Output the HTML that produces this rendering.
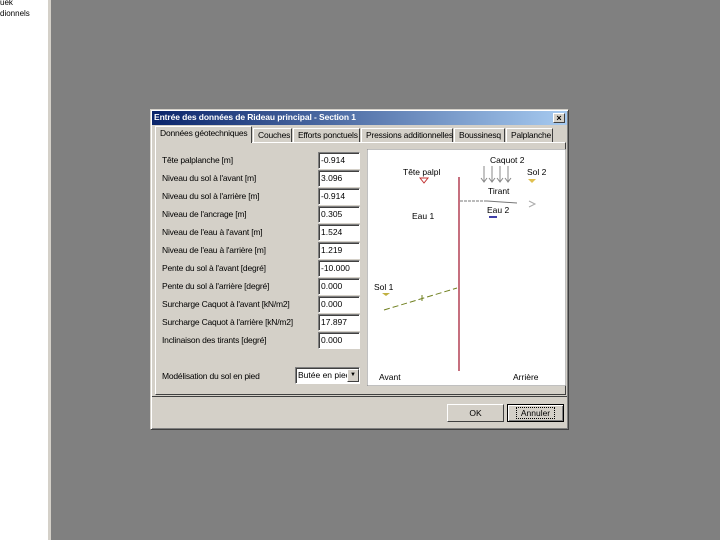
<!DOCTYPE html>
<html><head><meta charset="utf-8"><style>
*{margin:0;padding:0;box-sizing:border-box}
body{width:720px;height:540px;background:#808080;position:relative;overflow:hidden;font-family:"Liberation Sans",sans-serif;font-size:9px;color:#000}
.a{position:absolute}
.lbl{position:absolute;left:162px;font-size:8.5px;letter-spacing:-0.2px;white-space:nowrap}
.inp{position:absolute;left:318px;width:42px;height:17px;background:#fff;border-top:1px solid #808080;border-left:1px solid #808080;border-right:1px solid #fff;border-bottom:1px solid #fff;box-shadow:inset 1px 1px 0 #404040;font-size:8.5px;padding:2px 0 0 2px}
.tab{position:absolute;top:128px;height:14px;background:#d4d0c8;border-top:1px solid #fff;border-left:1px solid #fff;border-right:1px solid #404040;font-size:8.5px;padding:1px 0 0 4px;white-space:nowrap;letter-spacing:-0.2px}
.btn{position:absolute;top:404px;height:18px;background:#d4d0c8;border-top:1px solid #fff;border-left:1px solid #fff;border-right:1px solid #404040;border-bottom:1px solid #404040;text-align:center;font-size:8.5px;padding-top:3px}
svg text{font-family:"Liberation Sans",sans-serif;font-size:8.5px}
</style></head><body>
<div class="a" style="left:0;top:0;width:48px;height:540px;background:#fff"></div>
<div class="a" style="left:48px;top:0;width:3px;height:540px;background:#d4d0c8"></div>
<div class="a" style="left:0;top:-2px;font-size:8px">uek</div>
<div class="a" style="left:0;top:9px;font-size:8px">dionnels</div>

<div class="a" style="left:150px;top:109px;width:419px;height:321px;background:#d4d0c8;border-top:1px solid #d4d0c8;border-left:1px solid #d4d0c8;border-right:1px solid #404040;border-bottom:1px solid #404040;box-shadow:inset 1px 1px 0 #fff,inset -1px -1px 0 #808080"></div>
<div class="a" style="left:152px;top:111px;width:415px;height:14px;background:linear-gradient(90deg,#0a246a,#a6caf0);color:#fff;font-weight:bold;font-size:8.5px;padding:1px 0 0 2px;letter-spacing:-0.1px">Entrée des données de Rideau principal - Section 1</div>
<div class="a" style="left:553px;top:113px;width:12px;height:10px;background:#d4d0c8;border-top:1px solid #fff;border-left:1px solid #fff;border-right:1px solid #404040;border-bottom:1px solid #404040;font-size:9px;line-height:8px;text-align:center;font-weight:bold">×</div>

<div class="a" style="left:155px;top:142px;width:411px;height:253px;border-top:1px solid #fff;border-left:1px solid #fff;border-right:1px solid #404040;border-bottom:1px solid #404040"></div>
<div class="tab" style="left:155px;top:126px;height:17px;width:97px;background:#d4d0c8;z-index:2">Données géotechniques</div>
<div class="tab" style="left:253px;width:39px">Couches</div>
<div class="tab" style="left:293px;width:67px">Efforts ponctuels</div>
<div class="tab" style="left:361px;width:92px">Pressions additionnelles</div>
<div class="tab" style="left:454px;width:51px">Boussinesq</div>
<div class="tab" style="left:506px;width:47px">Palplanche</div>

<div class="lbl" style="top:155px">Tête palplanche [m]</div>
<div class="lbl" style="top:173px">Niveau du sol à l'avant [m]</div>
<div class="lbl" style="top:191px">Niveau du sol à l'arrière [m]</div>
<div class="lbl" style="top:209px">Niveau de l'ancrage [m]</div>
<div class="lbl" style="top:227px">Niveau de l'eau à l'avant [m]</div>
<div class="lbl" style="top:245px">Niveau de l'eau à l'arrière [m]</div>
<div class="lbl" style="top:263px">Pente du sol à l'avant [degré]</div>
<div class="lbl" style="top:281px">Pente du sol à l'arrière [degré]</div>
<div class="lbl" style="top:299px">Surcharge Caquot à l'avant [kN/m2]</div>
<div class="lbl" style="top:317px">Surcharge Caquot à l'arrière [kN/m2]</div>
<div class="lbl" style="top:335px">Inclinaison des tirants [degré]</div>
<div class="lbl" style="top:371px">Modélisation du sol en pied</div>

<div class="inp" style="top:152px">-0.914</div>
<div class="inp" style="top:170px">3.096</div>
<div class="inp" style="top:188px">-0.914</div>
<div class="inp" style="top:206px">0.305</div>
<div class="inp" style="top:224px">1.524</div>
<div class="inp" style="top:242px">1.219</div>
<div class="inp" style="top:260px">-10.000</div>
<div class="inp" style="top:278px">0.000</div>
<div class="inp" style="top:296px">0.000</div>
<div class="inp" style="top:314px">17.897</div>
<div class="inp" style="top:332px">0.000</div>
<div class="inp" style="top:367px;left:295px;width:65px;height:17px">Butée en pied</div>
<div class="a" style="left:347px;top:369px;width:12px;height:13px;background:#d4d0c8;border-top:1px solid #fff;border-left:1px solid #fff;border-right:1px solid #404040;border-bottom:1px solid #404040;font-size:6px;text-align:center;line-height:11px">▼</div>

<svg class="a" style="left:367px;top:149px" width="199" height="237">
<rect x="0" y="0" width="199" height="237" fill="#fff" stroke="#808080"/>
<line x1="92" y1="28" x2="92" y2="222" stroke="#a0102a" stroke-width="1.2"/>
<text x="36" y="26">Tête palpl</text>
<path d="M53 29 L57 34 L61 29Z" fill="none" stroke="#c03030"/>
<text x="123" y="14">Caquot 2</text>
<path d="M117 17 L117 33 M114 29 L117 33 L120 29 M125 17 L125 33 M122 29 L125 33 L128 29 M133 17 L133 33 M130 29 L133 33 L136 29 M141 17 L141 33 M138 29 L141 33 L144 29" stroke="#888" fill="none"/>
<text x="160" y="26">Sol 2</text>
<path d="M161 30 L165 34 L169 30Z" fill="#e0c050"/>
<text x="121" y="45">Tirant</text>
<line x1="93" y1="52" x2="120" y2="52" stroke="#777" stroke-dasharray="3 1"/>
<line x1="120" y1="52" x2="150" y2="54" stroke="#777"/>
<path d="M162 52 L168 55 L162 58" stroke="#aaa" fill="none"/>
<text x="120" y="64">Eau 2</text>
<line x1="122" y1="68" x2="130" y2="68" stroke="#00008b" stroke-width="1.5"/>
<text x="45" y="70">Eau 1</text>
<text x="7" y="141">Sol 1</text>
<path d="M15 144 L19 147 L23 144Z" fill="#c0b040"/>
<path d="M17 161 L90 139" stroke="#708020" stroke-dasharray="6 3"/>
<path d="M55 146 L55 152" stroke="#708020"/>
<text x="12" y="231">Avant</text>
<text x="146" y="231">Arrière</text>
</svg>

<div class="a" style="left:152px;top:396px;width:415px;height:1px;background:#404040"></div>
<div class="btn" style="left:447px;width:57px">OK</div>
<div class="btn" style="left:507px;width:57px;border:1px solid #000;box-shadow:inset 1px 1px 0 #fff,inset -1px -1px 0 #808080"><span style="outline:1px dotted #000;padding:0 4px">Annuler</span></div>
</body></html>
